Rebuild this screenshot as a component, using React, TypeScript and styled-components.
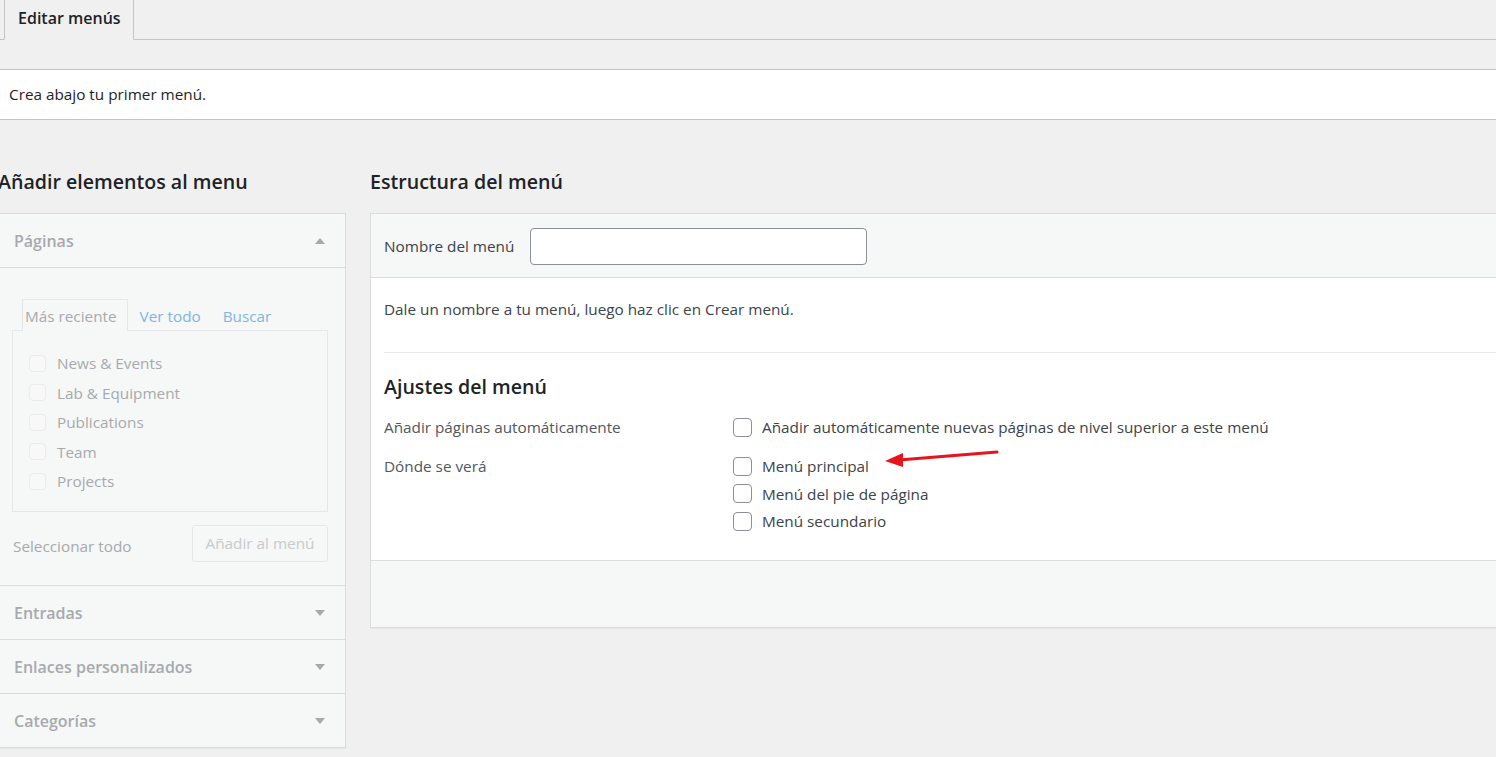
import React from 'react';
import styled, { createGlobalStyle } from 'styled-components';

const pages = ['News & Events', 'Lab & Equipment', 'Publications', 'Team', 'Projects'];
const locations = ['Menú principal', 'Menú del pie de página', 'Menú secundario'];
const closedBoxes = ['Entradas', 'Enlaces personalizados', 'Categorías'];

const Arrow: React.FC<{ up?: boolean }> = ({ up }) => (
  <svg width="10" height="6" viewBox="0 0 10 6">
    <polygon points={up ? '5,0 10,6 0,6' : '0,0 10,0 5,6'} fill="#a7aaad" />
  </svg>
);

const App: React.FC = () => {
  return (
    <>
      <GlobalStyle />
      <Page>
        <TabBar>
          <Tab>Editar menús</Tab>
        </TabBar>

        <Notice>Crea abajo tu primer menú.</Notice>

        <Columns>
          <LeftCol>
            <Heading $shift>Añadir elementos al menu</Heading>
            <Accordion>
              <Section>
                <SectionHead>
                  <span>Páginas</span>
                  <Arrow up />
                </SectionHead>
                <SectionBody>
                  <InnerTabs>
                    <InnerTab $active>Más reciente</InnerTab>
                    <InnerTab>Ver todo</InnerTab>
                    <InnerTab>Buscar</InnerTab>
                  </InnerTabs>
                  <TabPanel>
                    {pages.map((p) => (
                      <PageItem key={p}>
                        <FadedBox />
                        {p}
                      </PageItem>
                    ))}
                  </TabPanel>
                  <BoxFooter>
                    <span>Seleccionar todo</span>
                    <AddButton>Añadir al menú</AddButton>
                  </BoxFooter>
                </SectionBody>
              </Section>
              {closedBoxes.map((b) => (
                <Section key={b}>
                  <SectionHead $closed>
                    <span>{b}</span>
                    <Arrow />
                  </SectionHead>
                </Section>
              ))}
            </Accordion>
          </LeftCol>

          <RightCol>
            <Heading>Estructura del menú</Heading>
            <MenuPanel>
              <PanelHeader>
                <label>Nombre del menú</label>
                <NameInput />
              </PanelHeader>
              <PanelBody>
                <Hint>Dale un nombre a tu menú, luego haz clic en Crear menú.</Hint>
                <Settings>
                  <SubHeading>Ajustes del menú</SubHeading>
                  <SettingRow>
                    <SettingLabel>Añadir páginas automáticamente</SettingLabel>
                    <Options>
                      <Option>
                        <Check />
                        Añadir automáticamente nuevas páginas de nivel superior a este menú
                      </Option>
                    </Options>
                  </SettingRow>
                  <SettingRow>
                    <SettingLabel>Dónde se verá</SettingLabel>
                    <Options>
                      {locations.map((l, i) => (
                        <Option key={l}>
                          <Check />
                          {l}
                          {i === 0 && (
                            <RedArrow width="116" height="20" viewBox="0 0 116 20">
                              <line x1="14" y1="11" x2="112" y2="3" stroke="#e8141b" strokeWidth="3" strokeLinecap="round" />
                              <polygon points="0,12 18,4 18,18" fill="#e8141b" />
                            </RedArrow>
                          )}
                        </Option>
                      ))}
                    </Options>
                  </SettingRow>
                </Settings>
              </PanelBody>
              <PanelFooter />
            </MenuPanel>
          </RightCol>
        </Columns>
      </Page>
    </>
  );
};

const GlobalStyle = createGlobalStyle`
  html, body {
    margin: 0;
    background: #f0f0f1;
  }
  body {
    font-family: "Open Sans", "Noto Sans", sans-serif;
    font-size: 15.3px;
    color: #3c434a;
    overflow: hidden;
    -webkit-font-smoothing: antialiased;
  }
`;

const Page = styled.div`
  width: 1496px;
  height: 757px;
  overflow: hidden;
`;

const TabBar = styled.div`
  display: flex;
  height: 40px;
  border-bottom: 1px solid #c3c4c7;
  box-sizing: border-box;
  padding-left: 4px;
`;

const Tab = styled.div`
  display: flex;
  align-items: center;
  padding: 0 12px 3px 13px;
  height: 40px;
  box-sizing: border-box;
  border: 1px solid #c3c4c7;
  border-top: none;
  border-bottom-color: #f0f0f1;
  font-weight: 600;
  font-size: 16px;
  color: #1d2327;
  background: #f0f0f1;
  margin-bottom: -1px;
`;

const Notice = styled.div`
  margin-top: 29px;
  background: #fff;
  border-top: 1px solid #c3c4c7;
  border-bottom: 1px solid #c3c4c7;
  height: 51px;
  box-sizing: border-box;
  display: flex;
  align-items: center;
  padding-left: 9px;
  padding-bottom: 1px;
  color: #1d2327;
`;

const Columns = styled.div`
  display: flex;
  gap: 24px;
  margin-top: 45px;
`;

const LeftCol = styled.div`
  width: 346px;
  flex-shrink: 0;
`;

const RightCol = styled.div`
  flex: 1;
  min-width: 0;
  margin-right: -10px;
`;

const Heading = styled.h2<{ $shift?: boolean }>`
  margin: 0 0 17px ${(p) => (p.$shift ? '-2px' : '0')};
  padding-top: 3px;
  font-size: 19.6px;
  font-weight: 600;
  line-height: 28px;
  height: 28px;
  color: #1d2327;
  white-space: nowrap;
`;

const Accordion = styled.div`
  border: 1px solid #dcdcde;
  border-left: none;
  background: #f6f7f7;
  box-shadow: 0 1px 1px rgba(0, 0, 0, 0.04);
`;

const Section = styled.div`
  & + & {
    border-top: 1px solid #dcdcde;
  }
`;

const SectionHead = styled.div<{ $closed?: boolean }>`
  height: ${(p) => (p.$closed ? '53px' : '54px')};
  display: flex;
  align-items: center;
  justify-content: space-between;
  padding: 0 20px 0 14px;
  font-size: 16px;
  font-weight: 600;
  color: #a7aaad;
  border-bottom: ${(p) => (p.$closed ? 'none' : '1px solid #dcdcde')};
  box-sizing: border-box;
`;

const SectionBody = styled.div`
  padding: 30px 17px 23px 12px;
`;

const InnerTabs = styled.div`
  display: flex;
  align-items: flex-end;
  padding-left: 10px;
  height: 32px;
`;

const InnerTab = styled.div<{ $active?: boolean }>`
  height: 32px;
  box-sizing: border-box;
  display: flex;
  align-items: center;
  padding: 0 ${(p) => (p.$active ? '10px' : '9px')} 0 ${(p) => (p.$active ? '2px' : '11px')};
  color: ${(p) => (p.$active ? '#a7aaad' : '#7fb6df')};
  border: ${(p) => (p.$active ? '1px solid #e6e7e8' : '1px solid transparent')};
  border-bottom: none;
  background: ${(p) => (p.$active ? '#f6f7f7' : 'transparent')};
  margin-bottom: -1px;
`;

const TabPanel = styled.div`
  border: 1px solid #e6e7e8;
  padding: 22px 16px 20px 16px;
  display: flex;
  flex-direction: column;
  gap: 9.5px;
  height: 182px;
  box-sizing: border-box;
`;

const PageItem = styled.div`
  display: flex;
  align-items: center;
  gap: 11px;
  height: 20px;
  color: #a7aaad;
`;

const FadedBox = styled.span`
  width: 17px;
  height: 17px;
  border: 1px solid #ececed;
  border-radius: 4px;
  background: #f8f8f8;
  box-sizing: border-box;
`;

const BoxFooter = styled.div`
  display: flex;
  justify-content: space-between;
  align-items: center;
  margin-top: 13px;
  color: #a7aaad;
  padding-left: 1px;
  & > span {
    padding-top: 4px;
  }
`;

const AddButton = styled.div`
  height: 37px;
  width: 136px;
  box-sizing: border-box;
  display: flex;
  align-items: center;
  justify-content: center;
  border: 1px solid #e6e7e8;
  border-radius: 3px;
  background: #f6f7f7;
  color: #c8cacc;
  padding-bottom: 2px;
`;

const MenuPanel = styled.div`
  border: 1px solid #dcdcde;
  background: #fff;
  box-shadow: 0 1px 1px rgba(0, 0, 0, 0.04);
`;

const PanelHeader = styled.div`
  background: #f6f7f7;
  border-bottom: 1px solid #dcdcde;
  height: 64px;
  box-sizing: border-box;
  display: flex;
  align-items: center;
  padding: 0 13px;
  gap: 16px;
  color: #3c434a;
`;

const NameInput = styled.div`
  width: 337px;
  height: 37px;
  box-sizing: border-box;
  border: 1px solid #8c8f94;
  border-radius: 4px;
  background: #fff;
  margin-top: 1px;
`;

const PanelBody = styled.div`
  padding: 0 0 0 13px;
`;

const Hint = styled.p`
  margin: 0;
  height: 75px;
  display: flex;
  align-items: center;
  color: #3c434a;
  border-bottom: 1px solid #e8e8e8;
  box-sizing: border-box;
  padding-bottom: 13px;
`;

const Settings = styled.div`
  padding: 19px 0 29px 0;
`;

const SubHeading = styled.h3`
  margin: 0 0 15px;
  font-size: 19.6px;
  font-weight: 600;
  line-height: 30px;
  color: #1d2327;
`;

const SettingRow = styled.div`
  display: flex;
  & + & {
    margin-top: 19px;
  }
`;

const SettingLabel = styled.div`
  width: 349px;
  flex-shrink: 0;
  color: #50575e;
  line-height: 20px;
`;

const Options = styled.div`
  display: flex;
  flex-direction: column;
  gap: 7.5px;
`;

const Option = styled.div`
  display: flex;
  align-items: center;
  gap: 10px;
  line-height: 20px;
  color: #3c434a;
  position: relative;
`;

const Check = styled.span`
  width: 19px;
  height: 19px;
  box-sizing: border-box;
  border: 1px solid #8c8f94;
  border-radius: 4px;
  background: #fff;
  flex-shrink: 0;
`;

const RedArrow = styled.svg`
  position: absolute;
  left: 152px;
  top: -7px;
`;

const PanelFooter = styled.div`
  height: 66px;
  background: #f6f7f7;
  border-top: 1px solid #dcdcde;
`;

export default App;
